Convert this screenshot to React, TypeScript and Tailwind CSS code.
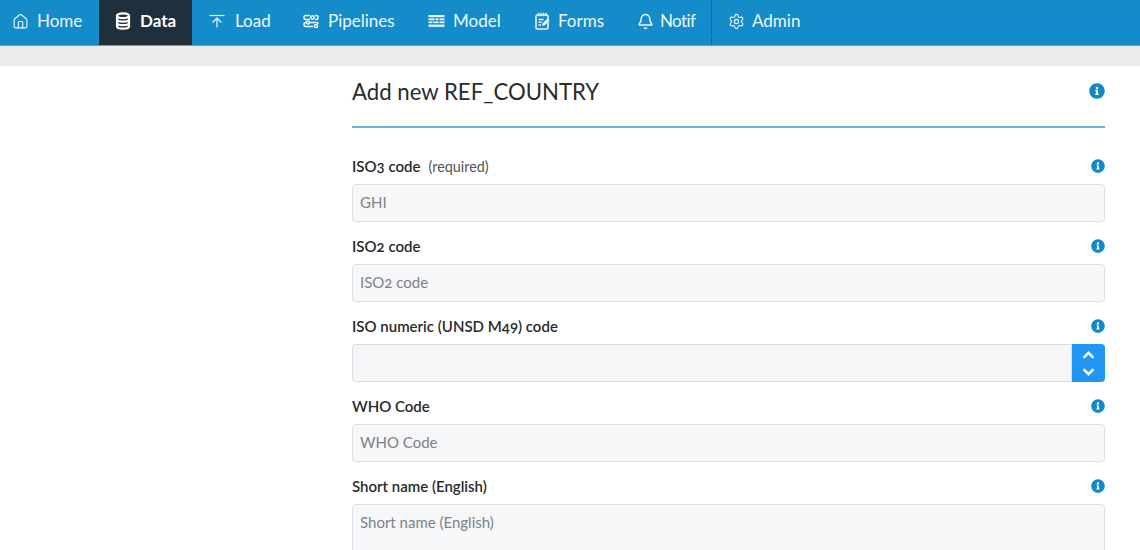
import React from "react";
import { House, Bell, Settings } from "lucide-react";
import { FaInfoCircle } from "react-icons/fa";

function DataIcon() {
  return (
    <svg width="16" height="18" viewBox="0 0 16 18" fill="none" stroke="currentColor" strokeWidth="2.2">
      <ellipse cx="8" cy="3.8" rx="6" ry="2.4" />
      <path d="M2 3.8v10.4c0 1.4 2.7 2.4 6 2.4s6-1 6-2.4V3.8" />
      <path d="M2 7.3c0 1.4 2.7 2.4 6 2.4s6-1 6-2.4" />
      <path d="M2 10.8c0 1.4 2.7 2.4 6 2.4s6-1 6-2.4" />
    </svg>
  );
}

function LoadIcon() {
  return (
    <svg width="16" height="16" viewBox="0 0 16 16" fill="none" stroke="currentColor" strokeWidth="1.2">
      <path d="M0.5 2.5h15" />
      <path d="M8 14.5V5.5M3.5 9.5 8 5.2l4.5 4.3" />
    </svg>
  );
}

function PipelinesIcon() {
  return (
    <svg width="16" height="16" viewBox="0 0 16 16" fill="none" stroke="currentColor" strokeWidth="1.5">
      <path d="M7 2.5H2.5a1.5 1.5 0 0 0-1.5 1.5v1a1.5 1.5 0 0 0 1.5 1.5H7" />
      <path d="M12 2.5h1.5A1.5 1.5 0 0 1 15 4v1a1.5 1.5 0 0 1-1.5 1.5H12" />
      <circle cx="9.5" cy="4.5" r="1.7" />
      <path d="M3 9.5h-.5A1.5 1.5 0 0 0 1 11v1a1.5 1.5 0 0 0 1.5 1.5H10" />
      <path d="M7 9.5h6.5A1.5 1.5 0 0 1 15 11" />
      <circle cx="5" cy="9.5" r="1.5" />
      <circle cx="13" cy="13" r="1.6" />
    </svg>
  );
}

function ModelIcon() {
  return (
    <svg width="17" height="14" viewBox="0 0 17 14" fill="currentColor">
      <rect x="0.5" y="1" width="16" height="2.2" />
      <rect x="0.5" y="4.4" width="6" height="1.8" />
      <rect x="7.5" y="4.4" width="3" height="1.8" />
      <rect x="11.5" y="4.4" width="5" height="1.8" />
      <rect x="0.5" y="7.4" width="4" height="1.8" />
      <rect x="5.5" y="7.4" width="5" height="1.8" />
      <rect x="11.5" y="7.4" width="5" height="1.8" />
      <rect x="0.5" y="10.6" width="16" height="2.2" />
    </svg>
  );
}

function FormsIcon() {
  return (
    <svg width="15" height="18" viewBox="0 0 15 18" fill="none" stroke="currentColor" strokeWidth="1.5">
      <rect x="1" y="3" width="12" height="14" rx="1.5" />
      <path d="M3.5 0.8v3.4M6 0.8v3.4M8.5 0.8v3.4M11 0.8v3.4" strokeWidth="1.3" />
      <path d="M3.5 7.5h5M3.5 10.2h3.5M3.5 13h2.5" strokeWidth="1.3" />
      <path d="M7 13.8l.5-2.4 5.2-5.2 2 2-5.2 5.2z" fill="currentColor" stroke="none" />
    </svg>
  );
}

const nav = [
  { label: "Home", icon: <House size={17} strokeWidth={1.6} />, cls: "w-[99px] pl-[12px] gap-[8px]" },
  { label: "Data", icon: <DataIcon />, cls: "w-[93px] pl-[16px] gap-[9px] bg-[#202f3c] font-bold text-white" },
  { label: "Load", icon: <LoadIcon />, cls: "w-[94px] pl-[17px] gap-[10px]" },
  { label: "Pipelines", icon: <PipelinesIcon />, cls: "w-[125px] pl-[17px] gap-[9px]" },
  { label: "Model", icon: <ModelIcon />, cls: "w-[107px] pl-[17px] gap-[8px]" },
  { label: "Forms", icon: <FormsIcon />, cls: "w-[103px] pl-[17px] gap-[8px]" },
  { label: "Notif", icon: <Bell size={17} strokeWidth={2} />, cls: "w-[91px] pl-[16px] gap-[6px] border-r border-[#0f6fa5] tracking-[-0.6px]" },
  { label: "Admin", icon: <Settings size={17} strokeWidth={1.6} />, cls: "w-[100px] pl-[16px] gap-[7px]" },
];

function Info({ big }: { big?: boolean }) {
  return <FaInfoCircle className={big ? "text-[#1189c9] text-[16px]" : "text-[#1189c9] text-[14px]"} />;
}

function Field({ label, extra, placeholder, value, spinner, area }: { label: string; extra?: string; placeholder?: string; value?: string; spinner?: boolean; area?: boolean }) {
  return (
    <div className="h-[80px] shrink-0">
      <div className="flex items-center justify-between h-[24px] mb-[6px]">
        <div className="flex items-center text-[15px] font-semibold text-[#2a2a2a] oldstyle-nums">
          {label}
          {extra && <span className="ml-[8px] mt-[1px] text-[14.4px] font-normal text-[#555]">{extra}</span>}
        </div>
        <Info />
      </div>
      {spinner ? (
        <div className="flex h-[38px]">
          <div className="flex-1 bg-[#f5f6f8] border border-[#d9dde1] rounded-l-[4px]" />
          <div className="w-[33px] bg-[#2196f3] rounded-r-[4px] flex flex-col items-center justify-center gap-[9px] text-white">
            <svg width="13" height="8" viewBox="0 0 13 8" fill="none" stroke="currentColor" strokeWidth="2.4"><path d="M1.5 6.8 6.5 1.8l5 5" /></svg>
            <svg width="13" height="8" viewBox="0 0 13 8" fill="none" stroke="currentColor" strokeWidth="2.4"><path d="M1.5 1.2 6.5 6.2l5-5" /></svg>
          </div>
        </div>
      ) : (
        <div className={`bg-[#f6f7f9] border border-[#dcdfe3] rounded-[4px] px-[7px] text-[15px] text-[#7d8288] oldstyle-nums ${area ? "h-[70px] pt-[6px]" : "h-[38px] flex items-center pb-[2px]"}`}>
          {value ?? placeholder}
        </div>
      )}
    </div>
  );
}

export default function App() {
  return (
    <div className="w-[1140px] h-[550px] overflow-hidden bg-white font-['Lato','Liberation_Sans',sans-serif]">
      <nav className="h-[46px] flex bg-[#148cc9] border-b border-[#4aa9da] text-[#eef7fc] text-[17px]">
        {nav.map((n) => (
          <div key={n.label} className={`h-[45px] flex items-center pb-[3px] ${n.cls}`}>
            {n.icon}
            <span>{n.label}</span>
          </div>
        ))}
      </nav>
      <div className="h-[20px] bg-[#ebebeb]" />
      <main className="ml-[352px] w-[753px]">
        <div className="h-[62px] flex items-center justify-between border-b-2 border-[#6fb3dd] pb-[11px]">
          <h1 className="mt-[2px] text-[22.2px] font-normal text-[#2b2b2b]">Add new REF_COUNTRY</h1>
          <Info big />
        </div>
        <div className="pt-[26px] flex flex-col">
          <Field label="ISO3 code" extra="(required)" value="GHI" />
          <Field label="ISO2 code" placeholder="ISO2 code" />
          <Field label="ISO numeric (UNSD M49) code" spinner />
          <Field label="WHO Code" placeholder="WHO Code" />
          <Field label="Short name (English)" placeholder="Short name (English)" area />
        </div>
      </main>
    </div>
  );
}
